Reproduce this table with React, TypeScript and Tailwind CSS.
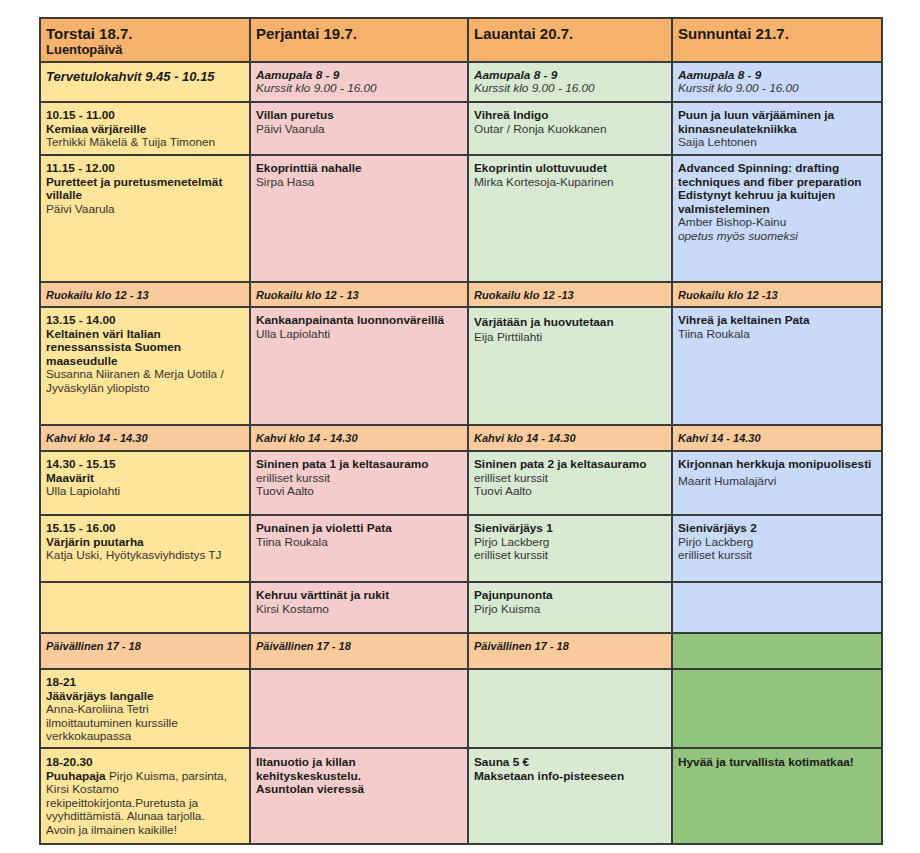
import React from "react";

const Y = "bg-[#ffe599]";
const P = "bg-[#f4cccc]";
const G = "bg-[#d9ead3]";
const B = "bg-[#c9daf8]";
const O = "bg-[#f6b26b]";
const M = "bg-[#f9cb9c]";
const D = "bg-[#93c47d]";

function Cell({ bg, children }: { bg: string; children?: React.ReactNode }) {
  return (
    <div className={`${bg} border-r-2 border-b-2 border-[#3a3a3a] px-[5px] pt-[6px] overflow-hidden`}>
      {children}
    </div>
  );
}

function T({ children, className = "" }: { children: React.ReactNode; className?: string }) {
  return <div className={`text-[11.8px] leading-[13.5px] font-bold text-[#1a1a1a] ${className}`}>{children}</div>;
}
function N({ children, className = "" }: { children: React.ReactNode; className?: string }) {
  return <div className={`text-[11.8px] leading-[13.5px] text-[#333333] ${className}`}>{children}</div>;
}
function Meal({ children }: { children: React.ReactNode }) {
  return <div className="text-[11px] leading-[13px] font-bold italic text-[#1a1a1a]">{children}</div>;
}
function Head({ children }: { children: React.ReactNode }) {
  return <div className="text-[15px] leading-[17px] font-bold text-[#1a1a1a]">{children}</div>;
}
function Aamu() {
  return (
    <>
      <div className="text-[11.8px] leading-[13.3px] font-bold italic text-[#1a1a1a]">Aamupala 8 - 9</div>
      <div className="text-[11.8px] leading-[13.3px] italic text-[#333333]">Kurssit klo 9.00 - 16.00</div>
    </>
  );
}

export default function App() {
  return (
    <div className="min-h-[853px] bg-white pt-[17px] pl-[39px]" style={{ fontFamily: '"Liberation Sans", Arial, sans-serif' }}>
      <div className="grid w-max grid-cols-[210px_218px_204px_210px] grid-rows-[44px_40px_53px_127px_25px_118px_26px_64px_67px_51px_36px_79px_96px] border-l-2 border-t-2 border-[#3a3a3a]">
        {/* Header */}
        <Cell bg={O}>
          <Head>Torstai 18.7.</Head>
          <div className="text-[13px] leading-[15px] font-bold text-[#1a1a1a]">Luentopäivä</div>
        </Cell>
        <Cell bg={O}><Head>Perjantai 19.7.</Head></Cell>
        <Cell bg={O}><Head>Lauantai 20.7.</Head></Cell>
        <Cell bg={O}><Head>Sunnuntai 21.7.</Head></Cell>

        {/* Row 2 */}
        <Cell bg={Y}>
          <div className="text-[13px] leading-[15px] font-bold italic text-[#1a1a1a]">Tervetulokahvit 9.45 - 10.15</div>
        </Cell>
        <Cell bg={P}><Aamu /></Cell>
        <Cell bg={G}><Aamu /></Cell>
        <Cell bg={B}><Aamu /></Cell>

        {/* Row 3 */}
        <Cell bg={Y}>
          <T>10.15 - 11.00</T>
          <T>Kemiaa värjäreille</T>
          <N>Terhikki Mäkelä &amp; Tuija Timonen</N>
        </Cell>
        <Cell bg={P}>
          <T>Villan puretus</T>
          <N>Päivi Vaarula</N>
        </Cell>
        <Cell bg={G}>
          <T>Vihreä Indigo</T>
          <N>Outar / Ronja Kuokkanen</N>
        </Cell>
        <Cell bg={B}>
          <T>Puun ja luun värjääminen ja</T>
          <T>kinnasneulatekniikka</T>
          <N>Saija Lehtonen</N>
        </Cell>

        {/* Row 4 */}
        <Cell bg={Y}>
          <T>11.15 - 12.00</T>
          <T>Puretteet ja puretusmenetelmät</T>
          <T>villalle</T>
          <N>Päivi Vaarula</N>
        </Cell>
        <Cell bg={P}>
          <T>Ekoprinttiä nahalle</T>
          <N>Sirpa Hasa</N>
        </Cell>
        <Cell bg={G}>
          <T>Ekoprintin ulottuvuudet</T>
          <N>Mirka Kortesoja-Kuparinen</N>
        </Cell>
        <Cell bg={B}>
          <T>Advanced Spinning: drafting</T>
          <T>techniques and fiber preparation</T>
          <T>Edistynyt kehruu ja kuitujen</T>
          <T>valmisteleminen</T>
          <N>Amber Bishop-Kainu</N>
          <N className="italic">opetus myös suomeksi</N>
        </Cell>

        {/* Row 5 meal */}
        <Cell bg={M}><Meal>Ruokailu klo 12 - 13</Meal></Cell>
        <Cell bg={M}><Meal>Ruokailu klo 12 - 13</Meal></Cell>
        <Cell bg={M}><Meal>Ruokailu klo 12 -13</Meal></Cell>
        <Cell bg={M}><Meal>Ruokailu klo 12 -13</Meal></Cell>

        {/* Row 6 */}
        <Cell bg={Y}>
          <T>13.15 - 14.00</T>
          <T>Keltainen väri Italian</T>
          <T>renessanssista Suomen</T>
          <T>maaseudulle</T>
          <N>Susanna Niiranen &amp; Merja Uotila /</N>
          <N>Jyväskylän yliopisto</N>
        </Cell>
        <Cell bg={P}>
          <T>Kankaanpainanta luonnonväreillä</T>
          <N>Ulla Lapiolahti</N>
        </Cell>
        <Cell bg={G}>
          <T className="mt-[2px]">Värjätään ja huovutetaan</T>
          <N className="mt-[1px]">Eija Pirttilahti</N>
        </Cell>
        <Cell bg={B}>
          <T>Vihreä ja keltainen Pata</T>
          <N>Tiina Roukala</N>
        </Cell>

        {/* Row 7 meal */}
        <Cell bg={M}><Meal>Kahvi klo 14 - 14.30</Meal></Cell>
        <Cell bg={M}><Meal>Kahvi klo 14 - 14.30</Meal></Cell>
        <Cell bg={M}><Meal>Kahvi klo 14 - 14.30</Meal></Cell>
        <Cell bg={M}><Meal>Kahvi 14 - 14.30</Meal></Cell>

        {/* Row 8 */}
        <Cell bg={Y}>
          <T>14.30 - 15.15</T>
          <T>Maavärit</T>
          <N>Ulla Lapiolahti</N>
        </Cell>
        <Cell bg={P}>
          <T>Sininen pata 1 ja keltasauramo</T>
          <N>erilliset kurssit</N>
          <N>Tuovi Aalto</N>
        </Cell>
        <Cell bg={G}>
          <T>Sininen pata 2 ja keltasauramo</T>
          <N>erilliset kurssit</N>
          <N>Tuovi Aalto</N>
        </Cell>
        <Cell bg={B}>
          <T>Kirjonnan herkkuja monipuolisesti</T>
          <N className="mt-[3px]">Maarit Humalajärvi</N>
        </Cell>

        {/* Row 9 */}
        <Cell bg={Y}>
          <T>15.15 - 16.00</T>
          <T>Värjärin puutarha</T>
          <N>Katja Uski, Hyötykasviyhdistys TJ</N>
        </Cell>
        <Cell bg={P}>
          <T>Punainen ja violetti Pata</T>
          <N>Tiina Roukala</N>
        </Cell>
        <Cell bg={G}>
          <T>Sienivärjäys 1</T>
          <N>Pirjo Lackberg</N>
          <N>erilliset kurssit</N>
        </Cell>
        <Cell bg={B}>
          <T>Sienivärjäys 2</T>
          <N>Pirjo Lackberg</N>
          <N>erilliset kurssit</N>
        </Cell>

        {/* Row 10 */}
        <Cell bg={Y} />
        <Cell bg={P}>
          <T>Kehruu värttinät ja rukit</T>
          <N>Kirsi Kostamo</N>
        </Cell>
        <Cell bg={G}>
          <T>Pajunpunonta</T>
          <N>Pirjo Kuisma</N>
        </Cell>
        <Cell bg={B} />

        {/* Row 11 meal */}
        <Cell bg={M}><Meal>Päivällinen 17 - 18</Meal></Cell>
        <Cell bg={M}><Meal>Päivällinen 17 - 18</Meal></Cell>
        <Cell bg={M}><Meal>Päivällinen 17 - 18</Meal></Cell>
        <Cell bg={D} />

        {/* Row 12 */}
        <Cell bg={Y}>
          <T>18-21</T>
          <T>Jäävärjäys langalle</T>
          <N>Anna-Karoliina Tetri</N>
          <N>ilmoittautuminen kurssille</N>
          <N>verkkokaupassa</N>
        </Cell>
        <Cell bg={P} />
        <Cell bg={G} />
        <Cell bg={D} />

        {/* Row 13 */}
        <Cell bg={Y}>
          <T className="mt-[1px]">18-20.30</T>
          <N>
            <span className="font-bold text-[#1a1a1a]">Puuhapaja</span> Pirjo Kuisma, parsinta,
          </N>
          <N>Kirsi Kostamo</N>
          <N>rekipeittokirjonta.Puretusta ja</N>
          <N>vyyhdittämistä. Alunaa tarjolla.</N>
          <N>Avoin ja ilmainen kaikille!</N>
        </Cell>
        <Cell bg={P}>
          <T className="mt-[1px]">Iltanuotio ja killan</T>
          <T>kehityskeskustelu.</T>
          <T>Asuntolan vieressä</T>
        </Cell>
        <Cell bg={G}>
          <T className="mt-[1px]">Sauna 5 €</T>
          <T>Maksetaan info-pisteeseen</T>
        </Cell>
        <Cell bg={D}>
          <T className="mt-[1px]">Hyvää ja turvallista kotimatkaa!</T>
        </Cell>
      </div>
    </div>
  );
}
